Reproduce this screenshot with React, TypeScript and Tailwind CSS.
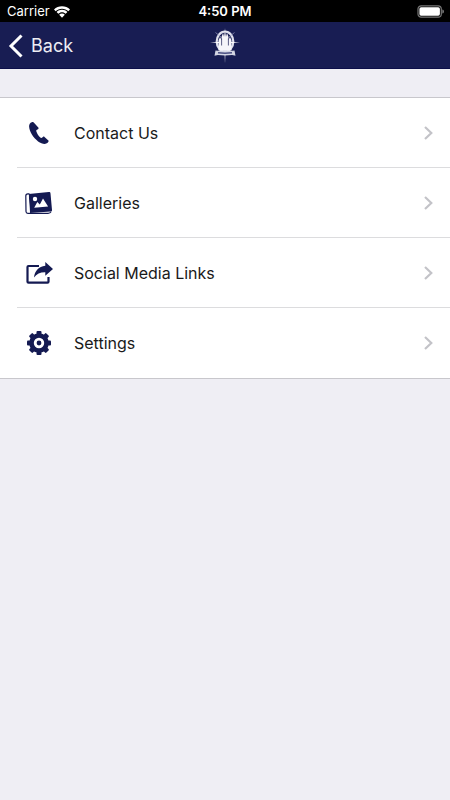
import type { ReactNode } from "react";

function WifiIcon() {
  return (
    <svg className="h-3 w-4" viewBox="0 0 16 12" fill="#fff" aria-hidden="true">
      <path d="M8 0.300C4.900 0.300 2.100 1.500 0 3.500L1.700 5.300C3.300 3.800 5.500 2.800 8 2.800s4.700 1 6.300 2.500L16 3.500C13.900 1.500 11.100 0.300 8 0.300z" />
      <path d="M8 3.800C5.900 3.800 4 4.600 2.600 5.900L4.300 7.700C5.300 6.800 6.500 6.200 8 6.200s2.700 0.600 3.700 1.500L13.400 5.900C12 4.600 10.100 3.800 8 3.800z" />
      <path d="M8 7.500C6.900 7.500 5.900 7.900 5.200 8.700L8 11.700 10.800 8.700C10.100 7.900 9.100 7.500 8 7.500z" />
    </svg>
  );
}

function BatteryIcon() {
  return (
    <svg className="h-[13px] w-[27px]" viewBox="0 0 27 13" aria-hidden="true">
      <rect x="1" y="0.800" width="23.300" height="11.400" rx="3.200" fill="none" stroke="#777" strokeWidth="1.200" />
      <rect x="2.400" y="2.200" width="20.500" height="8.600" rx="1.700" fill="#fff" />
      <path d="M25.400 4.500c1 .4 1.500 1.100 1.500 2s-.5 1.600-1.500 2z" fill="#888" />
    </svg>
  );
}

function Crest() {
  return (
    <svg className="h-9 w-[30px]" viewBox="0 0 30 36" aria-label="Club crest" role="img">
      <ellipse cx="15" cy="13.500" rx="8.300" ry="10" fill="none" stroke="#dfe0ec" strokeWidth="2.200" />
      <path d="M15 0L16 12 15 35.500 14 12z" fill="#fff" />
      <path d="M0 14.500L15 13.500 30 14.500 15 15.500z" fill="#fff" />
      <path d="M5.500 4.500L11 9M24.500 4.500L19 9" stroke="#9da0c2" strokeWidth="0.700" />
      <path d="M8.500 12.500l1.500-3.500 1.500 3V9l1.500-4 1.100 4 .9-3 .9 3 1.100-4 1.500 4v3L20 9l1.500 3.500V22.500H8.500z" fill="#f6f6fa" />
      <path d="M11.600 10.500v7M18.400 10.500v7" stroke="#181d53" strokeWidth="0.700" />
      <path d="M5.500 22.500q9.500 1.500 19 0l1 5.300-3.500-.8q-7 .8-14 0l-3.500.8z" fill="#d3d5e3" />
      <path d="M8 24.800q7 .8 14 0" fill="none" stroke="#4a4f82" strokeWidth="1.400" />
    </svg>
  );
}

function PhoneIcon() {
  return (
    <svg className="h-[22px] w-5" viewBox="0 0 20 22" fill="#141a52" aria-hidden="true">
      <path d="M2.800 0.200C1 0.900 0 2.300 0.100 4.600 0.400 9.800 4.300 15.800 9.100 19.400c3.200 2.300 6.400 3 8.200 2.100 1.100-.6 1.800-1.200 2.200-2.100.2-.5.1-.9-.4-1.200L15.500 14.900c-.5-.4-1.100-.4-1.500 0l-1.200.8c-.5.4-1 .3-1.500-.2-1.800-1.700-3.200-3.900-4-6.300-.2-.7 0-1.100.6-1.400l1.100-.6c.5-.3.700-.8.500-1.400L5.200 1C4.700.2 3.800-.2 2.800.2z" />
    </svg>
  );
}

function GalleryIcon() {
  return (
    <svg className="h-[22px] w-7" viewBox="0 0 28 22" aria-hidden="true">
      <path d="M4.500 1.800H2.800C1.500 1.800.8 2.700.8 4L1 19.500c0 1.200.7 1.800 1.900 1.800H23c1.500 0 2.500-.5 3-1.500" fill="none" stroke="#141a52" strokeWidth="1.200" />
      <path d="M3.700 2.100L23.800.1c1-.1 1.600.4 1.700 1.300L27 17.900c.1 1-.5 1.600-1.400 1.700L5 21z" fill="#141a52" />
      <path d="M3 3l1 17.300" stroke="#fff" strokeWidth="1.200" />
      <circle cx="10" cy="7" r="2.200" fill="#fff" />
      <path d="M9.200 15.700L12.300 10l2.500 2.500 3.200-6 5.100 8z" fill="#fff" />
    </svg>
  );
}

function ShareIcon() {
  return (
    <svg className="h-[22px] w-7" viewBox="0 0 28 22" aria-hidden="true">
      <path d="M14 4H3.500q-1 0-1 1V19.700q0 1 1 1h19q1 0 1-1V15" fill="none" stroke="#141a52" strokeWidth="2.200" />
      <path d="M20.300 0L28 6.900l-7.700 6.900v-3.500c-4.700-.2-8.600 1.500-11.300 5.300C9.600 9.200 13.700 4.300 20.300 3.800z" fill="#141a52" />
    </svg>
  );
}

function GearIcon() {
  return (
    <svg className="size-6" viewBox="-12 -12 24 24" aria-hidden="true">
      <g fill="#141a52">
        <circle r="9.800" />
        {[0, 45, 90, 135].map((angle) => (
          <rect key={angle} x="-2.500" y="-12" width="5" height="24" rx="1" transform={`rotate(${angle})`} />
        ))}
      </g>
      <circle r="3.800" fill="none" stroke="#fff" strokeWidth="2.800" />
    </svg>
  );
}

function Chevron() {
  return (
    <svg className="h-[14px] w-[9px]" viewBox="0 0 9 14" fill="none" stroke="#c3c3c8" strokeWidth="2.200" aria-hidden="true">
      <path d="M1 1l6.300 6L1 13" />
    </svg>
  );
}

const items: { label: string; icon: ReactNode }[] = [
  { label: "Contact Us", icon: <PhoneIcon /> },
  { label: "Galleries", icon: <GalleryIcon /> },
  { label: "Social Media Links", icon: <ShareIcon /> },
  { label: "Settings", icon: <GearIcon /> },
];

export default function App() {
  return (
    <div className="min-h-screen bg-[#efeef4] font-['Inter',sans-serif] text-[#1a1a1a]">
      <div className="grid h-[22px] grid-cols-3 items-center bg-black px-1.5 pt-px text-[13px] text-white">
        <div className="flex items-center gap-1 pl-px">
          <span>Carrier</span>
          <WifiIcon />
        </div>
        <span className="text-center font-semibold">4:50 PM</span>
        <div className="flex justify-end">
          <BatteryIcon />
        </div>
      </div>
      <header className="grid h-[47px] grid-cols-3 items-center border-b border-[#0c0f4a] bg-[#181d53] px-2 pt-0.5">
        <button type="button" className="flex items-center gap-2 justify-self-start text-lg text-[#ededf4]">
          <svg className="h-6 w-[15px]" viewBox="0 0 15 24" fill="none" stroke="#fff" strokeWidth="3" aria-hidden="true">
            <path d="M13.500 1.500L3 12l10.500 10.500" />
          </svg>
          Back
        </button>
        <div className="flex justify-center">
          <Crest />
        </div>
      </header>
      <main className="pt-7">
        <ul className="border-y border-[#c8c7cc] bg-white">
          {items.map(({ label, icon }) => (
            <li key={label} className="group pl-[17px]">
              <a href="#" className="flex h-[70px] items-center border-b border-[#dcdcde] pr-[17px] group-last:border-b-0">
                <span className="flex w-11 justify-center">{icon}</span>
                <span className="ml-[13px] flex-1 text-base">{label}</span>
                <Chevron />
              </a>
            </li>
          ))}
        </ul>
      </main>
    </div>
  );
}
